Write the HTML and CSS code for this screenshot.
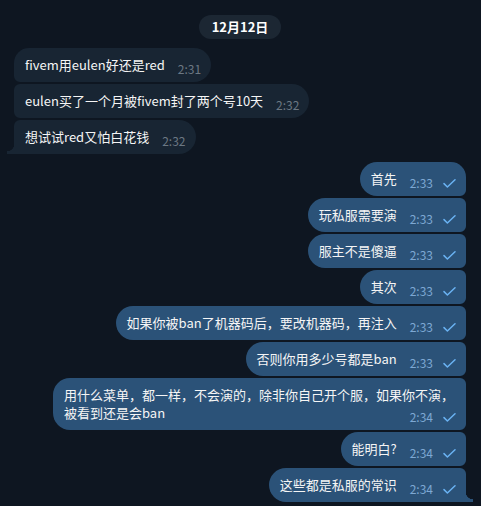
FILE: index.html
```html
<!DOCTYPE html>
<html lang="zh-CN">
<head>
    <meta charset="UTF-8">
    <meta name="viewport" content="width=device-width, initial-scale=1.0">
    <title>聊天记录</title>
    <link rel="stylesheet" href="styles.css">
</head>
<body>
    <div class="chat">
        <div class="date"><span>12月12日</span></div>

        <div class="group in">
            <div class="msg first">fivem用eulen好还是red<span class="meta"><span class="time">2:31</span></span></div>
            <div class="msg">eulen买了一个月被fivem封了两个号10天<span class="meta"><span class="time">2:32</span></span></div>
            <div class="msg last">想试试red又怕白花钱<span class="meta"><span class="time">2:32</span></span></div>
        </div>

        <div class="group out">
            <div class="msg first">首先<span class="meta"><span class="time">2:33</span><svg class="check" viewBox="0 0 13 9"><path d="M1 4.6 L4.4 8 L12 0.8"/></svg></span></div>
            <div class="msg">玩私服需要演<span class="meta"><span class="time">2:33</span><svg class="check" viewBox="0 0 13 9"><path d="M1 4.6 L4.4 8 L12 0.8"/></svg></span></div>
            <div class="msg">服主不是傻逼<span class="meta"><span class="time">2:33</span><svg class="check" viewBox="0 0 13 9"><path d="M1 4.6 L4.4 8 L12 0.8"/></svg></span></div>
            <div class="msg">其次<span class="meta"><span class="time">2:33</span><svg class="check" viewBox="0 0 13 9"><path d="M1 4.6 L4.4 8 L12 0.8"/></svg></span></div>
            <div class="msg">如果你被ban了机器码后，要改机器码，再注入<span class="meta"><span class="time">2:33</span><svg class="check" viewBox="0 0 13 9"><path d="M1 4.6 L4.4 8 L12 0.8"/></svg></span></div>
            <div class="msg">否则你用多少号都是ban<span class="meta"><span class="time">2:33</span><svg class="check" viewBox="0 0 13 9"><path d="M1 4.6 L4.4 8 L12 0.8"/></svg></span></div>
            <div class="msg">用什么菜单，都一样，不会演的，除非你自己开个服，如果你不演，被看到还是会ban<span class="meta"><span class="time">2:34</span><svg class="check" viewBox="0 0 13 9"><path d="M1 4.6 L4.4 8 L12 0.8"/></svg></span></div>
            <div class="msg">能明白?<span class="meta"><span class="time">2:34</span><svg class="check" viewBox="0 0 13 9"><path d="M1 4.6 L4.4 8 L12 0.8"/></svg></span></div>
            <div class="msg last">这些都是私服的常识<span class="meta"><span class="time">2:34</span><svg class="check" viewBox="0 0 13 9"><path d="M1 4.6 L4.4 8 L12 0.8"/></svg></span></div>
        </div>
    </div>
</body>
</html>
```
FILE: styles.css
```css
body {
    font-family: "Noto Sans CJK SC", "Noto Sans", sans-serif;
    background-color: #0e1621;
    color: #f5f5f5;
    margin: 0;
    padding: 0;
}
.chat {
    padding: 15px 15px 0 14px;
    display: flex;
    flex-direction: column;
}
.date {
    display: flex;
    justify-content: center;
    margin-bottom: 9px;
}
.date span {
    background-color: #1c2733;
    color: #ffffff;
    font-weight: bold;
    font-size: 13px;
    line-height: 24px;
    height: 24px;
    padding: 0 13px;
    border-radius: 12px;
}
.group {
    display: flex;
    flex-direction: column;
    gap: 2px;
}
.group.in {
    align-items: flex-start;
    margin-bottom: 8px;
}
.group.out {
    align-items: flex-end;
}
.msg {
    position: relative;
    box-sizing: border-box;
    max-width: 413px;
    padding: 8px 10px 8px 11px;
    font-size: 13px;
    line-height: 18px;
}
.meta {
    float: right;
    display: flex;
    align-items: center;
    margin: 4px 0 -4px 13px;
    font-size: 12px;
    line-height: 18px;
}
.in .msg {
    background-color: #182533;
    border-radius: 6px 17px 17px 6px;
}
.in .msg.first {
    border-top-left-radius: 15px;
}
.in .msg.last {
    border-bottom-left-radius: 0;
}
.in .msg.last::before {
    content: "";
    position: absolute;
    left: -7px;
    bottom: 0;
    width: 7px;
    height: 10px;
    background: radial-gradient(circle at 0 0, transparent 7px, #182533 7.5px);
}
.in .time {
    color: #6c7883;
}
.out .msg {
    background-color: #2b5278;
    border-radius: 17px 6px 6px 17px;
}
.out .msg.first {
    border-top-right-radius: 15px;
}
.out .msg.last {
    border-bottom-right-radius: 0;
}
.out .msg.last::after {
    content: "";
    position: absolute;
    right: -7px;
    bottom: 0;
    width: 7px;
    height: 10px;
    background: radial-gradient(circle at 100% 0, transparent 7px, #2b5278 7.5px);
}
.out .time {
    color: #7da8d3;
}
.check {
    width: 13px;
    height: 9px;
    margin-left: 10px;
    fill: none;
    stroke: #6ab2f2;
    stroke-width: 1.5;
    stroke-linecap: round;
    stroke-linejoin: round;
}
```
